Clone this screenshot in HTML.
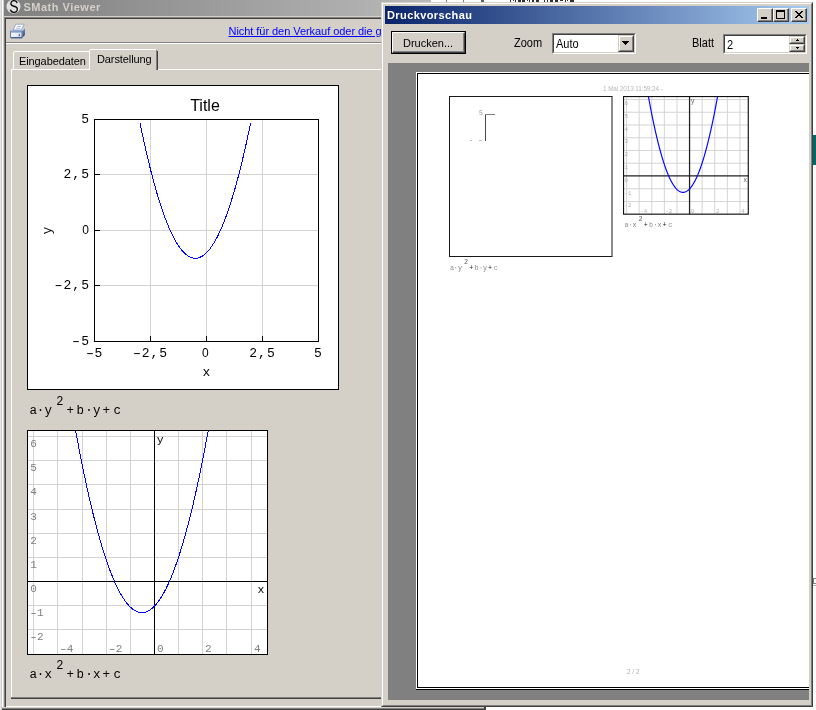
<!DOCTYPE html>
<html><head><meta charset="utf-8"><title>SMath Viewer</title>
<style>
html,body{margin:0;padding:0;}
body{width:816px;height:710px;overflow:hidden;background:#fff;position:relative;font-family:"Liberation Sans",sans-serif;font-size:11px;color:#000;}
div,span,a,svg{position:absolute;box-sizing:border-box;}
.t{white-space:nowrap;line-height:1;}
.m{font-family:"Liberation Mono",monospace;}
svg text{white-space:pre;}
</style></head><body>
<div style="left:0;top:0;width:816px;height:710px;will-change:transform;">

<div style="left:0px;top:0px;width:1px;height:710px;background:#e0e6f0;"></div>
<div style="left:1px;top:0px;width:485px;height:710px;background:#d4d0c8;"></div>
<div style="left:2px;top:0px;width:1px;height:708px;background:#fff;"></div>
<div style="left:4px;top:0;width:482px;height:16px;background:linear-gradient(90deg,#808080,#c0c0c0);"></div>
<svg style="left:5px;top:0" width="17" height="15" viewBox="5 0 17 15"><circle cx="13.5" cy="6.5" r="7" fill="#e0e0e0"/><text transform="translate(13.8,12.7) scale(0.8,1)" text-anchor="middle" font-family="Liberation Sans,sans-serif" font-size="17.5" fill="#000">S</text></svg>
<span class="t" style="left:23.5px;top:2px;font-weight:bold;font-size:11px;color:#d4d0c8;letter-spacing:0.5px">SMath Viewer</span>
<div style="left:4px;top:17px;width:482px;height:1px;background:#808080;"></div>
<div style="left:4px;top:18px;width:482px;height:1px;background:#404040;"></div>
<div style="left:4px;top:17px;width:1px;height:691px;background:#808080;"></div>
<div style="left:5px;top:18px;width:1px;height:690px;background:#404040;"></div>
<div style="left:6px;top:42px;width:480px;height:1px;background:#808080;"></div>
<div style="left:6px;top:43px;width:480px;height:1px;background:#fff;"></div>
<svg style="left:8px;top:22px" width="20" height="18" viewBox="8 22 20 18">
<defs><linearGradient id="pf" x1="0" y1="0" x2="1" y2="1"><stop offset="0" stop-color="#ffffff"/><stop offset="0.6" stop-color="#e4ecfc"/><stop offset="1" stop-color="#a8c0ec"/></linearGradient>
<linearGradient id="ps" x1="0" y1="0" x2="0" y2="1"><stop offset="0" stop-color="#7890b8"/><stop offset="1" stop-color="#2c4878"/></linearGradient></defs>
<polygon points="22.2,31 25,28.2 25,35 22.2,37.8" fill="url(#ps)"/>
<polygon points="10.4,31 13,28.6 25,28.2 22.2,31" fill="#c4d0e8"/>
<polygon points="15.8,24.2 24.2,24.2 21.4,30 13.2,30" fill="#fafcff" stroke="#7c94c0" stroke-width="0.7"/>
<line x1="17.2" y1="26.4" x2="21.2" y2="26.4" stroke="#8ca0c4" stroke-width="0.7"/>
<line x1="16.2" y1="28.2" x2="20.2" y2="28.2" stroke="#8ca0c4" stroke-width="0.7"/>
<rect x="10.6" y="31.2" width="11.4" height="6.4" fill="url(#pf)" stroke="#5874a4" stroke-width="0.9"/>
<line x1="10.6" y1="32.6" x2="22" y2="32.6" stroke="#7890b8" stroke-width="0.6"/>
<line x1="11" y1="37.9" x2="22" y2="37.9" stroke="#34507c" stroke-width="0.9"/>
<rect x="18.8" y="33.8" width="1.1" height="1.1" fill="#20a030"/>
<rect x="18.8" y="34.9" width="1.1" height="1.2" fill="#c02838"/>
</svg>
<a class="t" style="left:228.5px;top:26px;color:#0000ff;text-decoration:underline;text-underline-offset:0.5px;font-size:11px;letter-spacing:-0.05px">Nicht für den Verkauf oder die g</a>
<div style="left:11px;top:69px;width:475px;height:1px;background:#fff;"></div>
<div style="left:11px;top:69px;width:1px;height:629px;background:#fff;"></div>
<div style="left:11px;top:697px;width:475px;height:1px;background:#808080;"></div>
<div style="left:11px;top:698px;width:475px;height:1px;background:#404040;"></div>
<div style="left:13px;top:52px;width:1px;height:17px;background:#fff;"></div>
<div style="left:14px;top:51px;width:75px;height:1px;background:#fff;"></div>
<span class="t" style="left:19px;top:56px;font-size:11px;letter-spacing:-0.1px">Eingabedaten</span>
<div style="left:89px;top:49px;width:69px;height:21px;background:#d4d0c8;"></div>
<div style="left:89px;top:50px;width:1px;height:20px;background:#fff;"></div>
<div style="left:90px;top:49px;width:66px;height:1px;background:#fff;"></div>
<div style="left:156px;top:50px;width:1px;height:20px;background:#808080;"></div>
<div style="left:157px;top:51px;width:1px;height:19px;background:#404040;"></div>
<span class="t" style="left:97px;top:54px;font-size:11px;letter-spacing:-0.1px">Darstellung</span>
<div style="left:6px;top:706px;width:480px;height:1px;background:#fff;"></div>
<div style="left:2px;top:707px;width:484px;height:1px;background:#d4d0c8;"></div>
<div style="left:2px;top:708px;width:483px;height:1px;background:#808080;"></div>
<div style="left:2px;top:709px;width:483px;height:1px;background:#404040;"></div>
<div style="left:484px;top:707px;width:2px;height:3px;background:#404040;"></div>
<svg style="left:27px;top:85px" width="312" height="305" viewBox="27 85 312 305">
<rect x="27.5" y="85.5" width="311" height="304" fill="#fff" stroke="#000" shape-rendering="crispEdges"/>
<g shape-rendering="crispEdges" stroke="#d3d3d3" stroke-width="1">
<line x1="150.5" y1="119" x2="150.5" y2="341"/>
<line x1="206.5" y1="119" x2="206.5" y2="341"/>
<line x1="262.5" y1="119" x2="262.5" y2="341"/>
<line x1="94" y1="174.5" x2="318" y2="174.5"/>
<line x1="94" y1="230.5" x2="318" y2="230.5"/>
<line x1="94" y1="285.5" x2="318" y2="285.5"/>
</g>
<g shape-rendering="crispEdges" stroke="#000" stroke-width="1" fill="none">
<rect x="94.5" y="119.5" width="224" height="222"/>
<line x1="150.5" y1="336" x2="150.5" y2="341"/>
<line x1="206.5" y1="336" x2="206.5" y2="341"/>
<line x1="262.5" y1="336" x2="262.5" y2="341"/>
<line x1="94" y1="174.5" x2="100" y2="174.5"/>
<line x1="94" y1="230.5" x2="100" y2="230.5"/>
<line x1="94" y1="285.5" x2="100" y2="285.5"/>
</g>
<polyline points="139.97,122.81 140.53,125.51 141.08,128.17 141.63,130.81 142.19,133.43 142.74,136.02 143.29,138.58 143.84,141.11 144.40,143.61 144.95,146.09 145.50,148.54 146.06,150.97 146.61,153.37 147.16,155.74 147.72,158.08 148.27,160.39 148.82,162.68 149.38,164.95 149.93,167.18 150.48,169.39 151.04,171.57 151.59,173.72 152.14,175.85 152.70,177.95 153.25,180.02 153.80,182.07 154.36,184.08 154.91,186.07 155.46,188.04 156.02,189.97 156.57,191.88 157.12,193.77 157.68,195.62 158.23,197.45 158.78,199.25 159.34,201.03 159.89,202.77 160.44,204.49 161.00,206.19 161.55,207.85 162.10,209.49 162.66,211.10 163.21,212.69 163.76,214.25 164.32,215.78 164.87,217.28 165.42,218.76 165.98,220.20 166.53,221.63 167.08,223.02 167.64,224.39 168.19,225.73 168.74,227.04 169.30,228.33 169.85,229.59 170.40,230.82 170.96,232.03 171.51,233.21 172.06,234.36 172.62,235.48 173.17,236.58 173.72,237.65 174.28,238.69 174.83,239.71 175.38,240.70 175.94,241.66 176.49,242.59 177.04,243.50 177.60,244.38 178.15,245.23 178.70,246.06 179.25,246.86 179.81,247.63 180.36,248.38 180.91,249.09 181.47,249.79 182.02,250.45 182.57,251.09 183.13,251.69 183.68,252.28 184.23,252.83 184.79,253.36 185.34,253.86 185.89,254.34 186.45,254.78 187.00,255.20 187.55,255.60 188.11,255.96 188.66,256.30 189.21,256.61 189.77,256.90 190.32,257.15 190.87,257.38 191.43,257.59 191.98,257.76 192.53,257.91 193.09,258.03 193.64,258.13 194.19,258.20 194.75,258.24 195.30,258.25 195.85,258.24 196.41,258.20 196.96,258.13 197.51,258.03 198.07,257.91 198.62,257.76 199.17,257.59 199.73,257.38 200.28,257.15 200.83,256.90 201.39,256.61 201.94,256.30 202.49,255.96 203.05,255.60 203.60,255.20 204.15,254.78 204.71,254.34 205.26,253.86 205.81,253.36 206.37,252.83 206.92,252.28 207.47,251.69 208.03,251.09 208.58,250.45 209.13,249.79 209.69,249.09 210.24,248.38 210.79,247.63 211.35,246.86 211.90,246.06 212.45,245.23 213.00,244.38 213.56,243.50 214.11,242.59 214.66,241.66 215.22,240.70 215.77,239.71 216.32,238.69 216.88,237.65 217.43,236.58 217.98,235.48 218.54,234.36 219.09,233.21 219.64,232.03 220.20,230.82 220.75,229.59 221.30,228.33 221.86,227.04 222.41,225.73 222.96,224.39 223.52,223.02 224.07,221.63 224.62,220.20 225.18,218.76 225.73,217.28 226.28,215.78 226.84,214.25 227.39,212.69 227.94,211.10 228.50,209.49 229.05,207.85 229.60,206.19 230.16,204.49 230.71,202.77 231.26,201.03 231.82,199.25 232.37,197.45 232.92,195.62 233.48,193.77 234.03,191.88 234.58,189.97 235.14,188.04 235.69,186.07 236.24,184.08 236.80,182.07 237.35,180.02 237.90,177.95 238.46,175.85 239.01,173.72 239.56,171.57 240.12,169.39 240.67,167.18 241.22,164.95 241.78,162.68 242.33,160.39 242.88,158.08 243.44,155.74 243.99,153.37 244.54,150.97 245.10,148.54 245.65,146.09 246.20,143.61 246.76,141.11 247.31,138.58 247.86,136.02 248.41,133.43 248.97,130.81 249.52,128.17 250.07,125.51 250.63,122.81" fill="none" stroke="#0000ff" stroke-width="1" shape-rendering="crispEdges"/>
<g font-family="Liberation Mono,monospace" font-size="13" letter-spacing="1.05" fill="#000">
<text x="90" y="123" text-anchor="end">5</text>
<text x="90" y="178" text-anchor="end">2,5</text>
<text x="90" y="234" text-anchor="end"><tspan font-family="Liberation Sans,sans-serif" font-size="12">0</tspan></text>
<text x="90" y="289" text-anchor="end">2,5</text>
<text transform="translate(58.40,289) scale(1.6,1)" text-anchor="middle" letter-spacing="0">-</text>
<text x="90" y="345" text-anchor="end">5</text>
<text transform="translate(76.10,345) scale(1.6,1)" text-anchor="middle" letter-spacing="0">-</text>
<text transform="translate(89.95,357) scale(1.6,1)" text-anchor="middle" letter-spacing="0">-</text>
<text x="94.50" y="357">5</text>
<text transform="translate(137.10,357) scale(1.6,1)" text-anchor="middle" letter-spacing="0">-</text>
<text x="141.65" y="357">2,5</text>
<text x="202.07" y="357"><tspan font-family="Liberation Sans,sans-serif" font-size="12">0</tspan></text>
<text x="249.22" y="357">2,5</text>
<text x="314.07" y="357">5</text>
<text x="207" y="376" text-anchor="middle">x</text>
<text transform="translate(51,230) rotate(-90)" text-anchor="middle">y</text>
</g>
<text x="205" y="110.5" font-family="Liberation Sans,sans-serif" font-size="16" text-anchor="middle" fill="#000">Title</text>
</svg>
<span class="t m" style="left:29.4px;top:404.5px;font-size:12.5px;">a</span><span class="t m" style="left:36.7px;top:404.5px;font-size:12.5px;">·</span><span class="t m" style="left:44.6px;top:404.5px;font-size:12.5px;">y</span><span class="t m" style="left:66.4px;top:404.5px;font-size:12.5px;">+</span><span class="t m" style="left:76.4px;top:404.5px;font-size:12.5px;">b</span><span class="t m" style="left:85.2px;top:404.5px;font-size:12.5px;">·</span><span class="t m" style="left:92.9px;top:404.5px;font-size:12.5px;">y</span><span class="t m" style="left:102.4px;top:404.5px;font-size:12.5px;">+</span><span class="t m" style="left:113.4px;top:404.5px;font-size:12.5px;">c</span><span class="t m" style="left:56.2px;top:395.7px;font-size:12px;">2</span>
<svg style="left:27px;top:430px" width="241" height="225" viewBox="27 430 241 225">
<rect x="27" y="430" width="241" height="225" fill="#fff"/>
<g shape-rendering="crispEdges" stroke="#d3d3d3" stroke-width="1">
<line x1="33.5" y1="430" x2="33.5" y2="654"/>
<line x1="57.5" y1="430" x2="57.5" y2="654"/>
<line x1="82.5" y1="430" x2="82.5" y2="654"/>
<line x1="106.5" y1="430" x2="106.5" y2="654"/>
<line x1="130.5" y1="430" x2="130.5" y2="654"/>
<line x1="178.5" y1="430" x2="178.5" y2="654"/>
<line x1="202.5" y1="430" x2="202.5" y2="654"/>
<line x1="226.5" y1="430" x2="226.5" y2="654"/>
<line x1="251.5" y1="430" x2="251.5" y2="654"/>
<line x1="27" y1="629.5" x2="267" y2="629.5"/>
<line x1="27" y1="605.5" x2="267" y2="605.5"/>
<line x1="27" y1="557.5" x2="267" y2="557.5"/>
<line x1="27" y1="533.5" x2="267" y2="533.5"/>
<line x1="27" y1="509.5" x2="267" y2="509.5"/>
<line x1="27" y1="484.5" x2="267" y2="484.5"/>
<line x1="27" y1="460.5" x2="267" y2="460.5"/>
<line x1="27" y1="436.5" x2="267" y2="436.5"/>
</g>
<g font-family="Liberation Mono,monospace" font-size="11" fill="#808080">
<text transform="translate(33.6,640) scale(1.45,1)" text-anchor="middle">-</text><text x="37.0" y="640">2</text>
<text transform="translate(33.6,616) scale(1.45,1)" text-anchor="middle">-</text><text x="37.0" y="616">1</text>
<text x="30.2" y="592">0</text>
<text x="30.2" y="568">1</text>
<text x="30.2" y="544">2</text>
<text x="30.2" y="520">3</text>
<text x="30.2" y="495">4</text>
<text x="30.2" y="471">5</text>
<text x="30.2" y="447">6</text>
<text transform="translate(63.4,652) scale(1.45,1)" text-anchor="middle">-</text><text x="66.8" y="652">4</text>
<text transform="translate(112.4,652) scale(1.45,1)" text-anchor="middle">-</text><text x="115.8" y="652">2</text>
<text x="205" y="652">2</text>
<text x="254" y="652">4</text>
<text x="157" y="652">0</text>
</g>
<g shape-rendering="crispEdges" stroke="#000" stroke-width="1" fill="none">
<line x1="154.5" y1="430" x2="154.5" y2="654"/>
<line x1="27" y1="581.5" x2="267" y2="581.5"/>
</g>
<polyline points="71.96,409.73 72.66,413.77 73.36,417.77 74.06,421.72 74.76,425.64 75.46,429.52 76.16,433.35 76.86,437.15 77.56,440.90 78.26,444.61 78.96,448.29 79.66,451.92 80.36,455.51 81.06,459.06 81.75,462.57 82.45,466.04 83.15,469.47 83.85,472.86 84.55,476.21 85.25,479.52 85.95,482.79 86.65,486.01 87.35,489.20 88.05,492.34 88.75,495.45 89.45,498.51 90.15,501.54 90.85,504.52 91.55,507.46 92.25,510.36 92.95,513.23 93.65,516.05 94.35,518.83 95.05,521.57 95.75,524.26 96.45,526.92 97.15,529.54 97.85,532.12 98.55,534.65 99.25,537.15 99.95,539.61 100.65,542.02 101.35,544.40 102.05,546.73 102.75,549.02 103.45,551.28 104.15,553.49 104.85,555.66 105.55,557.79 106.25,559.88 106.95,561.93 107.65,563.94 108.35,565.91 109.05,567.83 109.75,569.72 110.45,571.57 111.15,573.37 111.84,575.14 112.54,576.87 113.24,578.55 113.94,580.19 114.64,581.80 115.34,583.36 116.04,584.88 116.74,586.36 117.44,587.80 118.14,589.20 118.84,590.56 119.54,591.88 120.24,593.16 120.94,594.40 121.64,595.60 122.34,596.75 123.04,597.87 123.74,598.94 124.44,599.98 125.14,600.97 125.84,601.93 126.54,602.84 127.24,603.71 127.94,604.55 128.64,605.34 129.34,606.09 130.04,606.80 130.74,607.47 131.44,608.10 132.14,608.69 132.84,609.23 133.54,609.74 134.24,610.21 134.94,610.63 135.64,611.02 136.34,611.36 137.04,611.67 137.74,611.93 138.44,612.16 139.14,612.34 139.84,612.48 140.54,612.58 141.24,612.64 141.94,612.66 142.63,612.64 143.33,612.58 144.03,612.48 144.73,612.34 145.43,612.16 146.13,611.93 146.83,611.67 147.53,611.36 148.23,611.02 148.93,610.63 149.63,610.21 150.33,609.74 151.03,609.23 151.73,608.69 152.43,608.10 153.13,607.47 153.83,606.80 154.53,606.09 155.23,605.34 155.93,604.55 156.63,603.71 157.33,602.84 158.03,601.93 158.73,600.97 159.43,599.98 160.13,598.94 160.83,597.87 161.53,596.75 162.23,595.60 162.93,594.40 163.63,593.16 164.33,591.88 165.03,590.56 165.73,589.20 166.43,587.80 167.13,586.36 167.83,584.88 168.53,583.36 169.23,581.80 169.93,580.19 170.63,578.55 171.33,576.87 172.03,575.14 172.72,573.37 173.42,571.57 174.12,569.72 174.82,567.83 175.52,565.91 176.22,563.94 176.92,561.93 177.62,559.88 178.32,557.79 179.02,555.66 179.72,553.49 180.42,551.28 181.12,549.02 181.82,546.73 182.52,544.40 183.22,542.02 183.92,539.61 184.62,537.15 185.32,534.65 186.02,532.12 186.72,529.54 187.42,526.92 188.12,524.26 188.82,521.57 189.52,518.83 190.22,516.05 190.92,513.23 191.62,510.36 192.32,507.46 193.02,504.52 193.72,501.54 194.42,498.51 195.12,495.45 195.82,492.34 196.52,489.20 197.22,486.01 197.92,482.79 198.62,479.52 199.32,476.21 200.02,472.86 200.72,469.47 201.42,466.04 202.12,462.57 202.81,459.06 203.51,455.51 204.21,451.92 204.91,448.29 205.61,444.61 206.31,440.90 207.01,437.15 207.71,433.35 208.41,429.52 209.11,425.64 209.81,421.72 210.51,417.77 211.21,413.77 211.91,409.73" fill="none" stroke="#0000ff" stroke-width="1" shape-rendering="crispEdges"/>
<g font-family="Liberation Mono,monospace" font-size="11.5" fill="#000">
<text x="257.6" y="593">x</text>
<text x="156.8" y="442.6">y</text>
</g>
<rect x="27.5" y="430.5" width="240" height="224" fill="none" stroke="#000" shape-rendering="crispEdges"/>
</svg>
<span class="t m" style="left:29.4px;top:668.5px;font-size:12.5px;">a</span><span class="t m" style="left:36.7px;top:668.5px;font-size:12.5px;">·</span><span class="t m" style="left:44.6px;top:668.5px;font-size:12.5px;">x</span><span class="t m" style="left:66.4px;top:668.5px;font-size:12.5px;">+</span><span class="t m" style="left:76.4px;top:668.5px;font-size:12.5px;">b</span><span class="t m" style="left:85.2px;top:668.5px;font-size:12.5px;">·</span><span class="t m" style="left:92.9px;top:668.5px;font-size:12.5px;">x</span><span class="t m" style="left:102.4px;top:668.5px;font-size:12.5px;">+</span><span class="t m" style="left:113.4px;top:668.5px;font-size:12.5px;">c</span><span class="t m" style="left:56.2px;top:659.7px;font-size:12px;">2</span>
<div style="left:431px;top:0px;width:385px;height:3px;background:#fff;"></div>
<div style="left:446px;top:0px;width:1px;height:2px;background:#808080;"></div>
<div style="left:463px;top:0px;width:1px;height:2px;background:#808080;"></div>
<div style="left:481px;top:0px;width:3px;height:2px;background:#606060;"></div>
<div style="left:510px;top:0px;width:1px;height:2px;background:#303030;"></div>
<div style="left:513px;top:0px;width:1px;height:1px;background:#303030;"></div>
<div style="left:515px;top:0px;width:1px;height:2px;background:#303030;"></div>
<div style="left:518px;top:0px;width:3px;height:2px;background:#303030;"></div>
<div style="left:522px;top:0px;width:3px;height:2px;background:#303030;"></div>
<div style="left:527px;top:0px;width:1px;height:1px;background:#303030;"></div>
<div style="left:529px;top:0px;width:1px;height:2px;background:#303030;"></div>
<div style="left:532px;top:0px;width:2px;height:2px;background:#303030;"></div>
<div style="left:536px;top:0px;width:3px;height:2px;background:#303030;"></div>
<div style="left:544px;top:0px;width:1px;height:2px;background:#303030;"></div>
<div style="left:547px;top:0px;width:1px;height:2px;background:#303030;"></div>
<div style="left:550px;top:0px;width:3px;height:2px;background:#303030;"></div>
<div style="left:555px;top:0px;width:3px;height:2px;background:#303030;"></div>
<div style="left:560px;top:0px;width:3px;height:1px;background:#303030;"></div>
<div style="left:565px;top:0px;width:1px;height:2px;background:#303030;"></div>
<div style="left:567px;top:0px;width:1px;height:1px;background:#303030;"></div>
<div style="left:570px;top:0px;width:4px;height:2px;background:#303030;"></div>
<div style="left:381px;top:2px;width:432px;height:705px;background:#d4d0c8;border-top:1px solid #d4d0c8;border-left:1px solid #d4d0c8;border-right:1px solid #404040;border-bottom:1px solid #404040;"></div>
<div style="left:382px;top:3px;width:430px;height:703px;border-top:1px solid #fff;border-left:1px solid #fff;border-right:1px solid #808080;border-bottom:1px solid #808080;"></div>
<div style="left:385px;top:6px;width:424px;height:18px;background:linear-gradient(90deg,#0a246a,#a6caf0);"></div>
<span class="t" style="left:387px;top:10px;font-weight:bold;font-size:11px;color:#fff;letter-spacing:0.4px">Druckvorschau</span>
<div style="left:757px;top:8px;width:16px;height:14px;background:#d4d0c8;border-top:1px solid #fff;border-left:1px solid #fff;border-right:1px solid #404040;border-bottom:1px solid #404040;"></div><div style="left:758px;top:9px;width:14px;height:12px;border-right:1px solid #808080;border-bottom:1px solid #808080;"></div><div style="left:761px;top:17px;width:6px;height:2px;background:#000;"></div>
<div style="left:773px;top:8px;width:16px;height:14px;background:#d4d0c8;border-top:1px solid #fff;border-left:1px solid #fff;border-right:1px solid #404040;border-bottom:1px solid #404040;"></div><div style="left:774px;top:9px;width:14px;height:12px;border-right:1px solid #808080;border-bottom:1px solid #808080;"></div><div style="left:776px;top:10px;width:9px;height:9px;border:1px solid #000;border-top:2px solid #000;"></div>
<div style="left:791px;top:8px;width:16px;height:14px;background:#d4d0c8;border-top:1px solid #fff;border-left:1px solid #fff;border-right:1px solid #404040;border-bottom:1px solid #404040;"></div><div style="left:792px;top:9px;width:14px;height:12px;border-right:1px solid #808080;border-bottom:1px solid #808080;"></div><svg style="left:795px;top:11px" width="8" height="7" viewBox="0 0 8 7" shape-rendering="crispEdges"><path d="M0 0h2v1h-2zM6 0h2v1h-2zM1 1h2v1h-2zM5 1h2v1h-2zM2 2h4v1h-4zM3 3h2v1h-2zM2 4h4v1h-4zM1 5h2v1h-2zM5 5h2v1h-2zM0 6h2v1h-2zM6 6h2v1h-2z" fill="#000"/></svg>
<div style="left:391px;top:31px;width:75px;height:23px;background:#d4d0c8;border:1px solid #000;"></div>
<div style="left:392px;top:32px;width:73px;height:21px;border-top:1px solid #fff;border-left:1px solid #fff;border-right:1px solid #404040;border-bottom:1px solid #404040;"></div>
<div style="left:393px;top:33px;width:71px;height:19px;border-right:1px solid #808080;border-bottom:1px solid #808080;"></div>
<span class="t" style="left:403px;top:38px;font-size:11px;letter-spacing:0pxtransform:scaleY(1.11);transform-origin:0 9.5px;">Drucken...</span>
<span class="t" style="left:514px;top:38px;font-size:11px;transform:scaleY(1.11);transform-origin:0 9.5px;">Zoom</span>
<div style="left:552px;top:33px;width:84px;height:21px;background:#fff;border-top:1px solid #808080;border-left:1px solid #808080;border-right:1px solid #fff;border-bottom:1px solid #fff;"></div><div style="left:553px;top:34px;width:82px;height:19px;border-top:1px solid #404040;border-left:1px solid #404040;border-right:1px solid #d4d0c8;border-bottom:1px solid #d4d0c8;"></div>
<div style="left:618px;top:35px;width:16px;height:17px;background:#d4d0c8;border-top:1px solid #d4d0c8;border-left:1px solid #d4d0c8;border-right:1px solid #404040;border-bottom:1px solid #404040;"></div><div style="left:619px;top:36px;width:14px;height:15px;border-top:1px solid #fff;border-left:1px solid #fff;border-right:1px solid #808080;border-bottom:1px solid #808080;"></div>
<svg style="left:622px;top:41px" width="7" height="4" viewBox="0 0 7 4" shape-rendering="crispEdges"><path d="M0 0h7v1h-7zM1 1h5v1h-5zM2 2h3v1h-3zM3 3h1v1h-1z" fill="#000"/></svg>
<span class="t" style="left:556px;top:39px;font-size:11px;transform:scaleY(1.11);transform-origin:0 9.5px;">Auto</span>
<span class="t" style="left:692px;top:38px;font-size:11px;transform:scaleY(1.11);transform-origin:0 9.5px;">Blatt</span>
<div style="left:723px;top:34px;width:84px;height:20px;background:#fff;border-top:1px solid #808080;border-left:1px solid #808080;border-right:1px solid #fff;border-bottom:1px solid #fff;"></div><div style="left:724px;top:35px;width:82px;height:18px;border-top:1px solid #404040;border-left:1px solid #404040;border-right:1px solid #d4d0c8;border-bottom:1px solid #d4d0c8;"></div>
<span class="t" style="left:727px;top:40px;font-size:11px;transform:scaleY(1.11);transform-origin:0 9.5px;">2</span>
<div style="left:789px;top:36px;width:16px;height:8px;background:#d4d0c8;border-top:1px solid #d4d0c8;border-left:1px solid #d4d0c8;border-right:1px solid #404040;border-bottom:1px solid #404040;"></div><div style="left:790px;top:37px;width:14px;height:6px;border-top:1px solid #fff;border-left:1px solid #fff;border-right:1px solid #808080;border-bottom:1px solid #808080;"></div>
<div style="left:789px;top:44px;width:16px;height:8px;background:#d4d0c8;border-top:1px solid #d4d0c8;border-left:1px solid #d4d0c8;border-right:1px solid #404040;border-bottom:1px solid #404040;"></div><div style="left:790px;top:45px;width:14px;height:6px;border-top:1px solid #fff;border-left:1px solid #fff;border-right:1px solid #808080;border-bottom:1px solid #808080;"></div>
<svg style="left:796px;top:39px" width="3" height="2" viewBox="0 0 3 2" shape-rendering="crispEdges"><path d="M1 0h1v1h-1zM0 1h3v1h-3z" fill="#000"/></svg>
<svg style="left:796px;top:47px" width="3" height="2" viewBox="0 0 3 2" shape-rendering="crispEdges"><path d="M0 0h3v1h-3zM1 1h1v1h-1z" fill="#000"/></svg>
<div style="left:388px;top:63px;width:421px;height:637px;background:#808080;overflow:hidden;">
<div style="left:28px;top:9px;width:400px;height:617px;background:#fff;"></div>
<div style="left:29px;top:10px;width:400px;height:615px;background:#000;"></div>
<div style="left:30px;top:11px;width:400px;height:613px;background:#fff;"></div>
<div style="left:28px;top:626px;width:400px;height:1px;background:#000;"></div>
<span class="t" style="left:215px;top:23px;font-size:6.4px;letter-spacing:-0.1px;color:#b8b8b8;">1 Mai 2013 11:59:24 -</span>
<span class="t" style="left:239px;top:606px;font-size:6.4px;color:#b0b0b0;">2 / 2</span>
<svg style="left:61px;top:33px" width="166" height="163" viewBox="0 0 166 163"><rect x="0.5" y="0.5" width="162.5" height="160" fill="none" stroke="#181818" stroke-width="1"/></svg>
<div style="left:97px;top:51px;width:1px;height:27px;background:#484848;"></div>
<div style="left:97px;top:51px;width:10px;height:1px;background:#808080;"></div>
<div style="left:82px;top:77px;width:2px;height:1px;background:#c0c0c0;"></div>
<div style="left:91px;top:77px;width:3px;height:1px;background:#c0c0c0;"></div>
<span class="t m" style="left:91px;top:48px;font-size:6.5px;color:#909090;">5</span>
<span class="t m" style="left:62.0px;top:202.0px;font-size:6.8px;color:#909090;">a</span><span class="t m" style="left:65.8px;top:202.0px;font-size:6.8px;color:#909090;">·</span><span class="t m" style="left:69.9px;top:202.0px;font-size:6.8px;color:#808080;">y</span><span class="t m" style="left:81.3px;top:202.0px;font-size:6.8px;color:#202020;">+</span><span class="t m" style="left:86.5px;top:202.0px;font-size:6.8px;color:#909090;">b</span><span class="t m" style="left:91.1px;top:202.0px;font-size:6.8px;color:#909090;">·</span><span class="t m" style="left:95.1px;top:202.0px;font-size:6.8px;color:#808080;">y</span><span class="t m" style="left:100.1px;top:202.0px;font-size:6.8px;color:#202020;">+</span><span class="t m" style="left:105.8px;top:202.0px;font-size:6.8px;color:#909090;">c</span><span class="t m" style="left:76.0px;top:196.0px;font-size:6.8px;color:#606060;">2</span>
<svg style="left:235px;top:33px" width="127" height="120" viewBox="0 0 127 120">
<g transform="scale(0.522,0.5275) translate(-27,-430)">
<rect x="27" y="430" width="241" height="225" fill="#fff"/>
<g stroke="#d4d4d4" stroke-width="1.9">
<line x1="33.9" y1="430" x2="33.9" y2="654"/>
<line x1="58.0" y1="430" x2="58.0" y2="654"/>
<line x1="82.1" y1="430" x2="82.1" y2="654"/>
<line x1="106.2" y1="430" x2="106.2" y2="654"/>
<line x1="130.4" y1="430" x2="130.4" y2="654"/>
<line x1="178.6" y1="430" x2="178.6" y2="654"/>
<line x1="202.8" y1="430" x2="202.8" y2="654"/>
<line x1="226.9" y1="430" x2="226.9" y2="654"/>
<line x1="251.0" y1="430" x2="251.0" y2="654"/>
<line x1="27" y1="629.8" x2="267" y2="629.8"/>
<line x1="27" y1="605.6" x2="267" y2="605.6"/>
<line x1="27" y1="557.4" x2="267" y2="557.4"/>
<line x1="27" y1="533.2" x2="267" y2="533.2"/>
<line x1="27" y1="509.1" x2="267" y2="509.1"/>
<line x1="27" y1="485.0" x2="267" y2="485.0"/>
<line x1="27" y1="460.9" x2="267" y2="460.9"/>
<line x1="27" y1="436.7" x2="267" y2="436.7"/>
</g>
<g font-family="Liberation Mono,monospace" font-size="11" fill="#b0b0b0">
<text x="30" y="641">-2</text>
<text x="30" y="617">-1</text>
<text x="30" y="593">0</text>
<text x="30" y="568">1</text>
<text x="30" y="544">2</text>
<text x="30" y="520">3</text>
<text x="30" y="496">4</text>
<text x="30" y="472">5</text>
<text x="30" y="448">6</text>
<text x="60" y="652">-4</text>
<text x="108" y="652">-2</text>
<text x="157" y="652">0</text>
<text x="205" y="652">2</text>
<text x="253" y="652">4</text>
</g>
<g stroke="#202020" stroke-width="2.4" fill="none">
<line x1="154.5" y1="430" x2="154.5" y2="654"/>
<line x1="27" y1="581.5" x2="267" y2="581.5"/>
</g>
<polyline points="71.96,409.73 72.66,413.77 73.36,417.77 74.06,421.72 74.76,425.64 75.46,429.52 76.16,433.35 76.86,437.15 77.56,440.90 78.26,444.61 78.96,448.29 79.66,451.92 80.36,455.51 81.06,459.06 81.75,462.57 82.45,466.04 83.15,469.47 83.85,472.86 84.55,476.21 85.25,479.52 85.95,482.79 86.65,486.01 87.35,489.20 88.05,492.34 88.75,495.45 89.45,498.51 90.15,501.54 90.85,504.52 91.55,507.46 92.25,510.36 92.95,513.23 93.65,516.05 94.35,518.83 95.05,521.57 95.75,524.26 96.45,526.92 97.15,529.54 97.85,532.12 98.55,534.65 99.25,537.15 99.95,539.61 100.65,542.02 101.35,544.40 102.05,546.73 102.75,549.02 103.45,551.28 104.15,553.49 104.85,555.66 105.55,557.79 106.25,559.88 106.95,561.93 107.65,563.94 108.35,565.91 109.05,567.83 109.75,569.72 110.45,571.57 111.15,573.37 111.84,575.14 112.54,576.87 113.24,578.55 113.94,580.19 114.64,581.80 115.34,583.36 116.04,584.88 116.74,586.36 117.44,587.80 118.14,589.20 118.84,590.56 119.54,591.88 120.24,593.16 120.94,594.40 121.64,595.60 122.34,596.75 123.04,597.87 123.74,598.94 124.44,599.98 125.14,600.97 125.84,601.93 126.54,602.84 127.24,603.71 127.94,604.55 128.64,605.34 129.34,606.09 130.04,606.80 130.74,607.47 131.44,608.10 132.14,608.69 132.84,609.23 133.54,609.74 134.24,610.21 134.94,610.63 135.64,611.02 136.34,611.36 137.04,611.67 137.74,611.93 138.44,612.16 139.14,612.34 139.84,612.48 140.54,612.58 141.24,612.64 141.94,612.66 142.63,612.64 143.33,612.58 144.03,612.48 144.73,612.34 145.43,612.16 146.13,611.93 146.83,611.67 147.53,611.36 148.23,611.02 148.93,610.63 149.63,610.21 150.33,609.74 151.03,609.23 151.73,608.69 152.43,608.10 153.13,607.47 153.83,606.80 154.53,606.09 155.23,605.34 155.93,604.55 156.63,603.71 157.33,602.84 158.03,601.93 158.73,600.97 159.43,599.98 160.13,598.94 160.83,597.87 161.53,596.75 162.23,595.60 162.93,594.40 163.63,593.16 164.33,591.88 165.03,590.56 165.73,589.20 166.43,587.80 167.13,586.36 167.83,584.88 168.53,583.36 169.23,581.80 169.93,580.19 170.63,578.55 171.33,576.87 172.03,575.14 172.72,573.37 173.42,571.57 174.12,569.72 174.82,567.83 175.52,565.91 176.22,563.94 176.92,561.93 177.62,559.88 178.32,557.79 179.02,555.66 179.72,553.49 180.42,551.28 181.12,549.02 181.82,546.73 182.52,544.40 183.22,542.02 183.92,539.61 184.62,537.15 185.32,534.65 186.02,532.12 186.72,529.54 187.42,526.92 188.12,524.26 188.82,521.57 189.52,518.83 190.22,516.05 190.92,513.23 191.62,510.36 192.32,507.46 193.02,504.52 193.72,501.54 194.42,498.51 195.12,495.45 195.82,492.34 196.52,489.20 197.22,486.01 197.92,482.79 198.62,479.52 199.32,476.21 200.02,472.86 200.72,469.47 201.42,466.04 202.12,462.57 202.81,459.06 203.51,455.51 204.21,451.92 204.91,448.29 205.61,444.61 206.31,440.90 207.01,437.15 207.71,433.35 208.41,429.52 209.11,425.64 209.81,421.72 210.51,417.77 211.21,413.77 211.91,409.73" fill="none" stroke="#0000ff" stroke-width="2.2"/>
<g font-family="Liberation Mono,monospace" font-size="12.5" fill="#606060">
<text x="257.5" y="593">x</text>
<text x="157" y="443">y</text>
</g>
<rect x="28" y="431" width="239" height="223" fill="none" stroke="#101010" stroke-width="2.2"/>
</g></svg>
<span class="t m" style="left:236.5px;top:159.4px;font-size:6.8px;color:#909090;">a</span><span class="t m" style="left:240.3px;top:159.4px;font-size:6.8px;color:#909090;">·</span><span class="t m" style="left:244.4px;top:159.4px;font-size:6.8px;color:#808080;">x</span><span class="t m" style="left:255.8px;top:159.4px;font-size:6.8px;color:#202020;">+</span><span class="t m" style="left:261.0px;top:159.4px;font-size:6.8px;color:#909090;">b</span><span class="t m" style="left:265.6px;top:159.4px;font-size:6.8px;color:#909090;">·</span><span class="t m" style="left:269.6px;top:159.4px;font-size:6.8px;color:#808080;">x</span><span class="t m" style="left:274.6px;top:159.4px;font-size:6.8px;color:#202020;">+</span><span class="t m" style="left:280.3px;top:159.4px;font-size:6.8px;color:#909090;">c</span><span class="t m" style="left:250.5px;top:153.4px;font-size:6.8px;color:#606060;">2</span>
</div>
<div style="left:813px;top:135px;width:3px;height:30px;background:#006868;"></div>
<div style="left:813px;top:165px;width:3px;height:545px;background:#fafafa;"></div>
<div style="left:813px;top:578px;width:3px;height:1px;background:#808080;"></div>
<div style="left:813px;top:583px;width:3px;height:1px;background:#808080;"></div>
<div style="left:813px;top:579px;width:1px;height:4px;background:#808080;"></div>
<div style="left:813px;top:585px;width:3px;height:1px;background:#b0b0b0;"></div>
</div></body></html>
